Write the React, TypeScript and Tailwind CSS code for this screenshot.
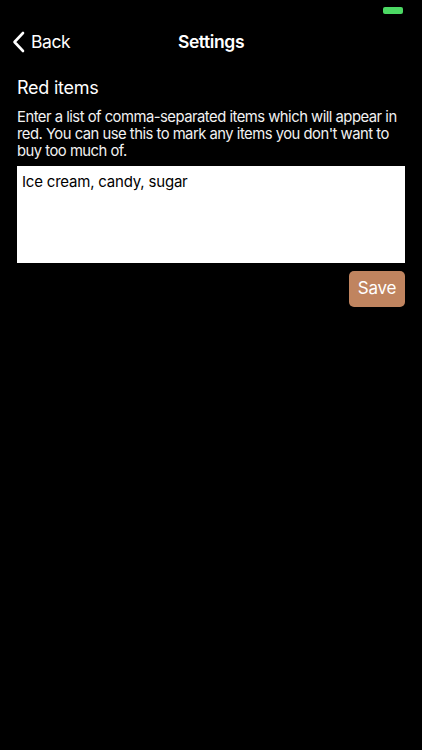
export default function App() {
    return (
        <div className="w-[422px] h-[750px] bg-black text-white overflow-hidden tracking-[-0.25px]" style={{ fontFamily: 'Inter, "Noto Sans", sans-serif' }}>
            {/* Status bar */}
            <div className="h-[20px] flex items-start justify-end pr-[19px] pt-[7px]">
                <div className="w-[20px] h-[7px] rounded-[2px] bg-[#4cd964]" />
            </div>

            {/* Nav bar */}
            <div className="relative h-[44px] flex items-center justify-center">
                <button className="absolute left-[12px] top-0 h-full flex items-center gap-[6px] text-white tracking-[-0.4px]">
                    <svg width="13" height="22" viewBox="0 0 13 22" fill="none">
                        <path d="M11 2 L2.5 11 L11 20" stroke="white" strokeWidth="2.6" strokeLinecap="round" strokeLinejoin="round" />
                    </svg>
                    <span className="text-[17.5px] leading-none">Back</span>
                </button>
                <h1 className="text-[17.5px] font-semibold leading-none tracking-[-0.4px]">Settings</h1>
            </div>

            {/* Content */}
            <div className="px-[17px] pt-[13px]">
                <h2 className="text-[18px] leading-[22px]">Red items</h2>
                <p className="mt-[10px] text-[14.8px] leading-[17px] tracking-[-0.5px] text-[#f2f2f2]">
                    Enter a list of comma-separated items which will appear in red. You can use this to mark any items you don't want to buy too much of.
                </p>
                <textarea
                    className="mt-[6px] block w-full h-[97px] bg-white text-black text-[15px] px-[5px] pt-[5px] resize-none outline-none tracking-[-0.2px]"
                    defaultValue="Ice cream, candy, sugar"
                />
                <div className="flex justify-end mt-[8px]">
                    <button className="h-[36px] px-[9px] rounded-[5px] bg-[#c0845f] text-white text-[17px] tracking-[-0.3px]">Save</button>
                </div>
            </div>
        </div>
    );
}
